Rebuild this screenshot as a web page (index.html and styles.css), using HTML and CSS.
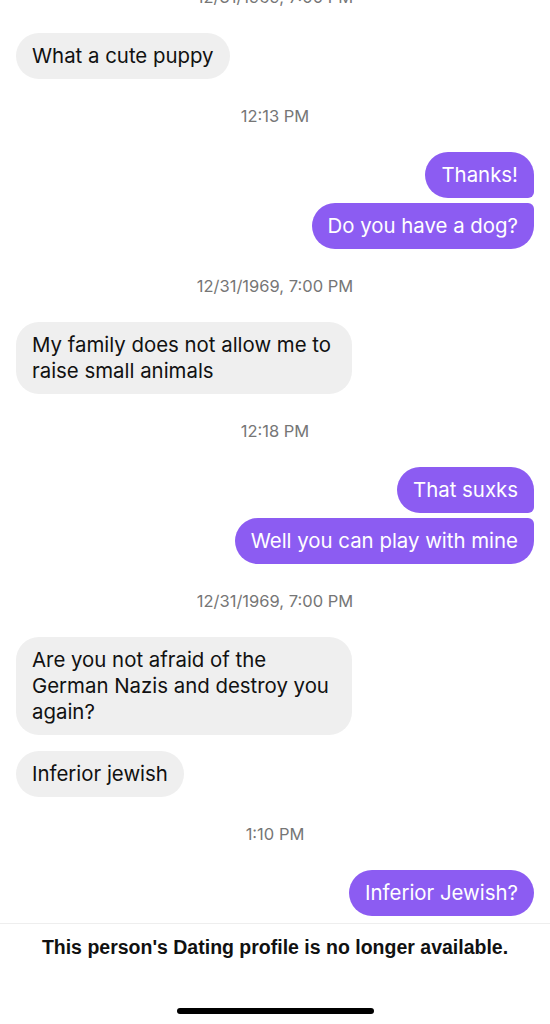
FILE: index.html
```
<html>
<head>
  <title>Messages</title>
  <link rel="stylesheet" href="styles.css">
</head>
<body>
  <div class="chat">
    <div class="stamp first">12/31/1969, 7:00 PM</div>

    <div class="row in"><div class="bubble">What a cute puppy</div></div>

    <div class="stamp">12:13 PM</div>

    <div class="group">
      <div class="row out"><div class="bubble top">Thanks!</div></div>
      <div class="row out"><div class="bubble bottom">Do you have a dog?</div></div>
    </div>

    <div class="stamp">12/31/1969, 7:00 PM</div>

    <div class="row in"><div class="bubble">My family does not allow me to raise small animals</div></div>

    <div class="stamp">12:18 PM</div>

    <div class="group">
      <div class="row out"><div class="bubble top">That suxks</div></div>
      <div class="row out"><div class="bubble bottom">Well you can play with mine</div></div>
    </div>

    <div class="stamp">12/31/1969, 7:00 PM</div>

    <div class="group loose">
      <div class="row in"><div class="bubble">Are you not afraid of the German Nazis and destroy you again?</div></div>
      <div class="row in"><div class="bubble">Inferior jewish</div></div>
    </div>

    <div class="stamp">1:10 PM</div>

    <div class="row out"><div class="bubble">Inferior Jewish?</div></div>
  </div>

  <div class="footer">
    <p>This person's Dating profile is no longer available.</p>
    <div class="home-bar"></div>
  </div>
</body>
</html>
```

FILE: styles.css
```
body {
  margin: 0;
  background-color: #fff;
  font-family: Inter, "Liberation Sans", Arial, sans-serif;
  color: #111;
  overflow: hidden;
}

.chat {
  display: flex;
  flex-direction: column;
  padding: 0 16px;
}

.stamp {
  height: 73px;
  display: flex;
  align-items: center;
  justify-content: center;
  font-size: 16.5px;
  color: #767676;
}

.stamp.first {
  margin-top: -40px;
}

.group {
  display: flex;
  flex-direction: column;
  gap: 5px;
}

.group.loose {
  gap: 16px;
}

.row {
  display: flex;
}

.row.in {
  justify-content: flex-start;
}

.row.out {
  justify-content: flex-end;
}

.bubble {
  max-width: 304px;
  padding: 10px 16px;
  font-size: 20.4px;
  line-height: 26px;
  min-height: 26px;
  border-radius: 23px;
  background-color: #efefef;
  color: #111;
}

.out .bubble {
  background-color: #8c5cf2;
  color: #fff;
}

.out .bubble.top {
  border-bottom-right-radius: 6px;
}

.out .bubble.bottom {
  border-top-right-radius: 6px;
}

.footer {
  margin-top: 7px;
  border-top: 1px solid #eeeeee;
  display: flex;
  flex-direction: column;
  align-items: center;
  height: 110px;
}

.footer p {
  margin: 12px 0 0;
  font-family: "Liberation Sans", Arial, sans-serif;
  font-weight: bold;
  font-size: 19.5px;
  color: #111;
}

.home-bar {
  margin-top: 49px;
  width: 197px;
  height: 6px;
  border-radius: 3px;
  background-color: #000;
}
```
